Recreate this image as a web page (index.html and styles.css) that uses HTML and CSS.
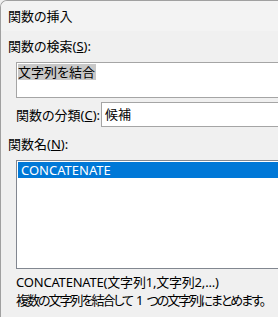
FILE: index.html
```html
<html lang="ja">
<head>
    <meta charset="UTF-8">
    <meta name="viewport" content="width=device-width, initial-scale=1.0">
    <title>関数の挿入</title>
    <link rel="stylesheet" href="styles.css">
</head>
<body>

    <div class="dialog">
        <!-- Title bar -->
        <div class="titlebar">関数の挿入</div>

        <div class="content">
            <!-- Search section -->
            <div class="label first-label">関数の検索(<u>S</u>):</div>
            <div class="search-box"><span class="selected-text">文字列を結合</span></div>

            <!-- Category section -->
            <div class="category-row">
                <span class="label category-label">関数の分類(<u>C</u>):</span>
                <div class="combo">候補</div>
            </div>

            <!-- Function list -->
            <div class="label list-label">関数名(<u>N</u>):</div>
            <div class="list-box">
                <div class="list-item selected-item">CONCATENATE</div>
            </div>

            <div class="syntax">CONCATENATE(文字列1,文字列2,...)</div>
            <div class="description">複数の文字列を結合して<span class="gap">1</span>つの文字列にまとめます。</div>
        </div>
    </div>

</body>
</html>
```

FILE: styles.css
```css
html, body {
    margin: 0;
    overflow: hidden;
    background-color: #f0f0f0;
}

body {
    font-family: "Noto Sans", "Noto Sans CJK JP", sans-serif;
    font-size: 13px;
    color: #000;
    font-feature-settings: "palt";
}

.dialog {
    height: 316px;
    border-top: 1px solid #a0a0a0;
    border-left: 1px solid #a0a0a0;
    border-top-left-radius: 7px;
    background-color: #f0f0f0;
    overflow: hidden;
}

.titlebar {
    height: 30px;
    line-height: 30px;
    padding-left: 7px;
    background-color: #f3f3f3;
}

.content {
    padding-left: 7px;
}

.label {
    line-height: 16px;
}

.first-label {
    padding-top: 7px;
}

/* boxes run on past the right edge of the window, so no right border */
.search-box {
    margin-top: 8px;
    margin-left: 8px;
    height: 36px;
    box-sizing: border-box;
    border: 1px solid #a5a5a5;
    border-right: none;
    background-color: #fff;
    padding: 1px;
    line-height: 16px;
}

.selected-text {
    display: inline-block;
    background-color: #c8c8c8;
    padding-right: 1px;
}

.category-row {
    display: flex;
    align-items: center;
    margin-top: 4px;
    margin-left: 8px;
}

.category-label {
    width: 85px;
}

.combo {
    flex: 1;
    height: 25px;
    box-sizing: border-box;
    border: 1px solid #a5a5a5;
    border-right: none;
    background-color: #fff;
    padding-left: 3px;
    line-height: 23px;
}

.list-label {
    margin-top: 9px;
}

.list-box {
    margin-top: 8px;
    margin-left: 8px;
    height: 109px;
    box-sizing: border-box;
    border: 1px solid #828790;
    border-right: none;
    background-color: #fff;
    padding: 1px 0 0 1px;
}

.list-item {
    height: 16px;
    line-height: 16px;
    padding-left: 3px;
}

.selected-item {
    background-color: #0078d7;
    color: #fff;
}

.syntax {
    margin-top: 4px;
    margin-left: 8px;
    line-height: 18px;
    letter-spacing: -0.2px;
}

.description {
    margin-left: 8px;
    line-height: 18px;
    letter-spacing: -2px;
    white-space: nowrap;
}

.gap {
    margin: 0 5px 0 4px;
}
```
